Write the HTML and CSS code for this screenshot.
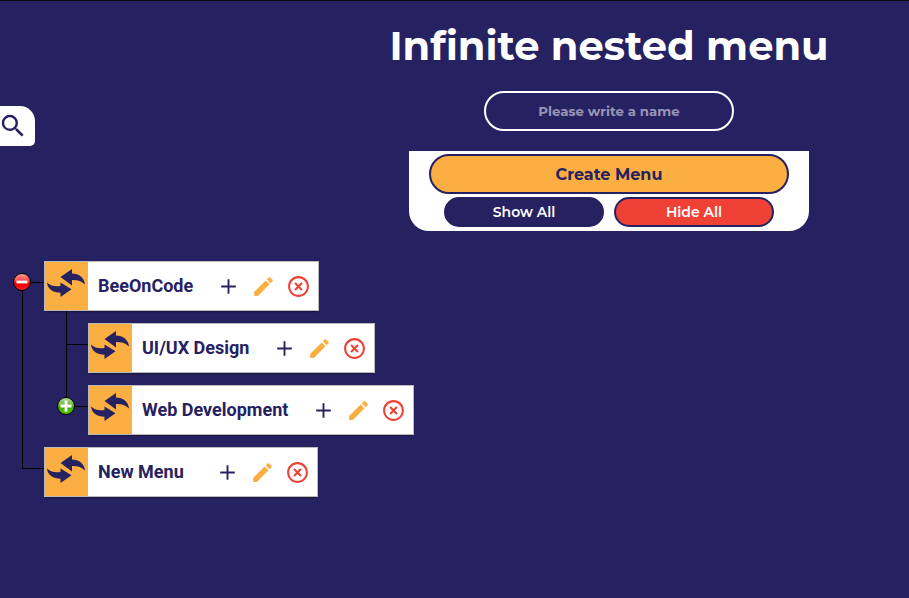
FILE: index.html
```
<!DOCTYPE html>
<html lang="en">
<head>
<meta charset="utf-8">
<title>Infinite nested menu</title>
<link rel="stylesheet" href="styles.css">
</head>
<body>
<svg class="defs" aria-hidden="true">
  <defs>
    <symbol id="swap" viewBox="0 0 38 28">
      <path d="M13.500 8 25 0v4.500C32 4.500 37.500 9 38 15.500c-3.500-3.500-7.500-4.700-13-4.500v5.500z"/>
      <path d="M24.500 20.300 13.500 28V23.800C6 23.800.5 20 0 13.500c4 3.500 8 4.200 13.500 3.500v-3.500z"/>
    </symbol>
    <symbol id="add" viewBox="0 0 24 24"><path d="M19 12.900h-6.100v6.100h-1.800v-6.100H5v-1.800h6.100V5h1.800v6.100H19z"/></symbol>
    <symbol id="edit" viewBox="0 0 24 24"><path d="M3 17.460v3.040c0 .28.22.5.5.5h3.040c.13 0 .26-.05.35-.15L17.810 9.940l-3.750-3.750L3.150 17.100c-.1.1-.15.22-.15.36zM20.710 7.040a.996.996 0 0 0 0-1.410l-2.340-2.340a.996.996 0 0 0-1.410 0l-1.830 1.830 3.750 3.750 1.830-1.830z"/></symbol>
    <symbol id="remove" viewBox="0 0 24 24"><path d="M14.590 8 12 10.590 9.410 8 8 9.410 10.590 12 8 14.590 9.410 16 12 13.410 14.590 16 16 14.590 13.410 12 16 9.410 14.590 8zM12 2C6.470 2 2 6.470 2 12s4.470 10 10 10 10-4.470 10-10S17.530 2 12 2zm0 18c-4.410 0-8-3.590-8-8s3.590-8 8-8 8 3.590 8 8-3.590 8-8 8z"/></symbol>
  </defs>
</svg>
<button class="search" aria-label="Search"><svg viewBox="0 0 24 24"><path d="M15.500 14h-.79l-.28-.27A6.471 6.471 0 0 0 16 9.500 6.500 6.500 0 1 0 9.500 16c1.610 0 3.090-.59 4.230-1.570l.27.28v.79l5 4.990L20.490 19l-4.990-5zm-6 0C7.010 14 5 11.990 5 9.500S7.010 5 9.500 5 14 7.010 14 9.500 11.990 14 9.500 14z"/></svg></button>
<header class="top">
  <h1>Infinite nested menu</h1>
  <input class="name-input" type="text" placeholder="Please write a name">
  <div class="panel">
    <button class="create">Create Menu</button>
    <div class="pair">
      <button class="show">Show All</button>
      <button class="hide">Hide All</button>
    </div>
  </div>
</header>
<main>
  <ul class="tree">
    <li class="node">
      <button class="toggle minus" aria-label="Collapse"><svg viewBox="0 0 16 16"><path d="M2.500 8h11"/></svg></button>
      <div class="row">
        <span class="handle"><svg><use href="#swap"/></svg></span>
        <div class="content"><span class="label w1">BeeOnCode</span><svg class="add"><use href="#add"/></svg><svg class="edit"><use href="#edit"/></svg><svg class="remove"><use href="#remove"/></svg></div>
      </div>
      <ul>
        <li class="node">
          <div class="row">
            <span class="handle"><svg><use href="#swap"/></svg></span>
            <div class="content"><span class="label w2">UI/UX Design</span><svg class="add"><use href="#add"/></svg><svg class="edit"><use href="#edit"/></svg><svg class="remove"><use href="#remove"/></svg></div>
          </div>
        </li>
        <li class="node">
          <button class="toggle plus" aria-label="Expand"><svg viewBox="0 0 16 16"><path d="M2.500 8h11M8 2.500v11"/></svg></button>
          <div class="row">
            <span class="handle"><svg><use href="#swap"/></svg></span>
            <div class="content"><span class="label w3">Web Development</span><svg class="add"><use href="#add"/></svg><svg class="edit"><use href="#edit"/></svg><svg class="remove"><use href="#remove"/></svg></div>
          </div>
        </li>
      </ul>
    </li>
    <li class="node">
      <div class="row">
        <span class="handle"><svg><use href="#swap"/></svg></span>
        <div class="content"><span class="label w4">New Menu</span><svg class="add"><use href="#add"/></svg><svg class="edit"><use href="#edit"/></svg><svg class="remove"><use href="#remove"/></svg></div>
      </div>
    </li>
  </ul>
</main>
</body>
</html>
```
FILE: styles.css
```
* { box-sizing: border-box; }
body {
  margin: 0;
  height: 598px;
  overflow: hidden;
  border-top: 1px solid #0b0b10;
  background: #262161;
  color: #262161;
  font-family: Montserrat, Inter, sans-serif;
}
.defs { position: absolute; width: 0; height: 0; }
button, input { padding: 0; font-family: inherit; }
.search {
  position: absolute;
  left: 0;
  top: 106px;
  width: 35px;
  height: 40px;
  border: 0;
  border-radius: 0 15px 5px 0;
  background: #fff;
  overflow: hidden;
}
.search svg {
  display: block;
  width: 30px;
  height: 30px;
  margin-left: -2px;
  fill: #262161;
}
.top {
  display: flex;
  flex-direction: column;
  align-items: center;
  width: 400px;
  margin-left: 409px;
}
h1 {
  margin: 20px 0 21px;
  color: #fff;
  font-size: 40px;
  line-height: 49px;
  font-weight: 700;
  white-space: nowrap;
}
.name-input {
  width: 250px;
  height: 40px;
  border: 2px solid #fff;
  border-radius: 20px;
  background: transparent;
  color: #fff;
  font-size: 13.333px;
  font-weight: 700;
  text-align: center;
}
.name-input::placeholder { color: #9995b5; opacity: 1; }
.panel {
  display: flex;
  flex-direction: column;
  align-items: center;
  gap: 3px;
  width: 400px;
  height: 80px;
  margin-top: 20px;
  padding-top: 3px;
  background: #fff;
  border-radius: 0 0 20px 20px;
}
.panel button { border: 2px solid #262161; border-radius: 20px; }
.panel .create {
  width: 360px;
  height: 40px;
  background: #fbae42;
  color: #262161;
  font-size: 16px;
  font-weight: 700;
}
.pair { display: flex; gap: 10px; }
.pair button {
  width: 160px;
  height: 30px;
  color: #fff;
  font-size: 14px;
  font-weight: 600;
}
.pair .show { background: #262161; }
.pair .hide { background: #ef4136; }

.tree { padding: 30px 0 0 44px; }
ul { margin: 0; padding: 0; list-style: none; }
.node { position: relative; padding-bottom: 12px; }
.node ul { padding: 12px 0 0 44px; }
.node:has(> ul) { padding-bottom: 0; }
.node::before {
  content: "";
  position: absolute;
  left: -22px;
  top: 21px;
  width: 22px;
  height: 1px;
  background: #000;
}
.node::after {
  content: "";
  position: absolute;
  left: -22px;
  top: -12px;
  width: 1px;
  height: 34px;
  background: #000;
}
.tree > .node:first-child::after { top: 21px; height: 165px; }
.node .node:not(:last-child)::after { height: 74px; }
.row {
  display: flex;
  width: max-content;
  height: 50px;
  border: 1px solid #bbb;
  background: #fff;
  box-shadow: 0 2px 2px -2px #000;
}
.handle {
  width: 43px;
  background: #fbae42;
  border-right: 1px solid #bbb;
}
.handle svg {
  display: block;
  width: 38px;
  height: 28px;
  margin: 7px 0 0 2px;
  fill: #262161;
}
.content {
  display: flex;
  align-items: center;
  gap: 10px;
  padding: 0 7px 0 10px;
}
.content svg { width: 25px; height: 25px; }
.label {
  margin-right: 13px;
  white-space: nowrap;
  font: 700 18px/24px Roboto, sans-serif;
}
.w1 { width: 95px; }
.w2 { width: 107px; }
.w3 { width: 146px; }
.w4 { width: 94px; }
.add { fill: #262161; }
.edit { fill: #fbae42; }
.remove { fill: #ef4136; }
.toggle {
  position: absolute;
  z-index: 1;
  left: -31px;
  top: 12px;
  width: 18px;
  height: 18px;
  border: 1px solid #000;
  border-radius: 50%;
}
.toggle svg {
  display: block;
  width: 16px;
  height: 16px;
  stroke: #fff;
  stroke-width: 2.800;
}
.minus { background: linear-gradient(#ff9a95, #f55 35%, #e80000 60%, #ff2020); }
.plus { background: linear-gradient(#b5dc99, #68ba35 45%, #3ca800 55%, #55c800); }
```
